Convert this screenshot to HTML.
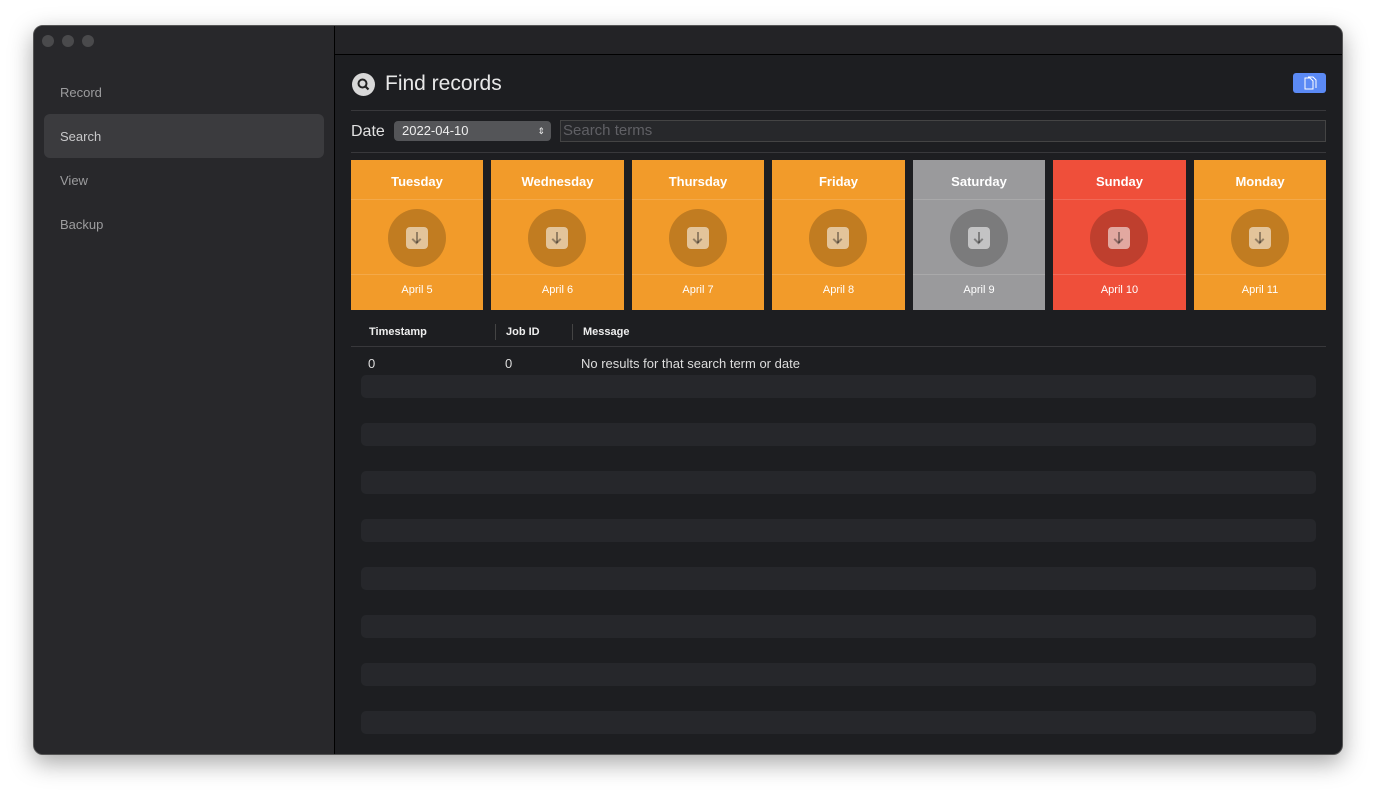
<!DOCTYPE html><html><head><style>
*{margin:0;padding:0;box-sizing:border-box}
body{width:1376px;height:797px;background:#fff;font-family:"Liberation Sans",sans-serif;position:relative;overflow:hidden}
.win{position:absolute;left:33px;top:25px;width:1310px;height:730px;border-radius:10px;overflow:hidden;background:#1d1e21;box-shadow:0 8px 24px rgba(0,0,0,.35);border:1px solid #555}
.side{position:absolute;left:0;top:0;width:301px;height:100%;background:#28282b;border-right:1px solid #000}
.dot{position:absolute;top:9px;width:12px;height:12px;border-radius:50%;background:#4a4a4c}
.nav{position:absolute;left:26px;font-size:13px;color:#9c9c9e}
.sel{position:absolute;left:10px;top:88px;width:280px;height:44px;background:#3b3b3e;border-radius:6px}
.tb{position:absolute;left:301px;top:0;right:0;height:29px;background:#232326;border-bottom:1px solid #000}
.a{position:absolute}
.card{position:absolute;top:134px;width:132px;height:150px;background:#f29b2a;color:#fff;text-align:center}
.card .h{height:40px;line-height:44px;font-size:13px;font-weight:bold;border-bottom:1px solid rgba(255,255,255,.15)}
.card .c{position:absolute;left:37px;top:49px;width:58px;height:58px;border-radius:50%;background:rgba(0,0,0,.2)}
.card .s{position:absolute;left:18px;top:18px;width:22px;height:22px;border-radius:4px;background:rgba(255,255,255,.55)}
.card .f{position:absolute;left:0;right:0;top:114px;border-top:1px solid rgba(255,255,255,.15);font-size:11px;line-height:30px}
.stripe{position:absolute;left:327px;width:955px;height:23px;background:#26272b;border-radius:5px}
</style></head><body><div class="win">
<div class="side"><div class="dot" style="left:8px"></div><div class="dot" style="left:28px"></div><div class="dot" style="left:48px"></div>
<div class="sel"></div>
<div class="nav" style="top:59px">Record</div><div class="nav" style="top:103px;color:#c8c8ca">Search</div><div class="nav" style="top:147px">View</div><div class="nav" style="top:191px">Backup</div></div>
<div class="tb"></div>
<div class="a" style="left:318px;top:47px;width:23px;height:23px;border-radius:50%;background:#d8d8d8"><svg width="23" height="23"><circle cx="10.5" cy="10.5" r="4" fill="none" stroke="#222" stroke-width="2"/><path d="M13.5 13.5l3 3" stroke="#222" stroke-width="2.2"/></svg></div>
<div class="a" style="left:351px;top:46px;font-size:21px;color:#e8e8e8">Find records</div>
<div class="a" style="left:1259px;top:47px;width:33px;height:20px;background:#5b8af5;border-radius:3px"><svg width="33" height="20"><path d="M12 5h5l3 3v8h-8z M15 4h5l3 3v8" fill="none" stroke="#fff" stroke-width="1"/></svg></div>
<div class="a" style="left:317px;top:84px;width:975px;height:1px;background:#38383b"></div>
<div class="a" style="left:317px;top:97px;font-size:16px;color:#e0e0e0">Date</div>
<div class="a" style="left:360px;top:95px;width:157px;height:20px;background:#545558;border-radius:4px;color:#eee;font-size:13px;line-height:20px;padding-left:8px">2022-04-10<span style="position:absolute;right:6px;font-size:9px;top:0">&#8661;</span></div>
<div class="a" style="left:526px;top:94px;width:766px;height:22px;background:#27282b;border:1px solid #444;color:#606065;font-size:15px;line-height:20px;padding-left:2px">Search terms</div>
<div class="a" style="left:317px;top:126px;width:975px;height:1px;background:#38383b"></div>
<div class="card" style="left:317px"><div class="h">Tuesday</div><div class="c"><div class="s"></div></div><div class="f">April 5</div></div>
<div class="card" style="left:457px;width:133px"><div class="h">Wednesday</div><div class="c"><div class="s"></div></div><div class="f">April 6</div></div>
<div class="card" style="left:598px"><div class="h">Thursday</div><div class="c"><div class="s"></div></div><div class="f">April 7</div></div>
<div class="card" style="left:738px;width:133px"><div class="h">Friday</div><div class="c"><div class="s"></div></div><div class="f">April 8</div></div>
<div class="card" style="left:879px;background:#9a9a9c"><div class="h">Saturday</div><div class="c"><div class="s"></div></div><div class="f">April 9</div></div>
<div class="card" style="left:1019px;width:133px;background:#ef4f3a"><div class="h">Sunday</div><div class="c"><div class="s"></div></div><div class="f">April 10</div></div>
<div class="card" style="left:1160px"><div class="h">Monday</div><div class="c"><div class="s"></div></div><div class="f">April 11</div></div>
<div class="a" style="left:335px;top:300px;font-size:11px;font-weight:bold;color:#eee">Timestamp</div>
<div class="a" style="left:461px;top:298px;width:1px;height:16px;background:#444"></div>
<div class="a" style="left:472px;top:300px;font-size:11px;font-weight:bold;color:#eee">Job ID</div>
<div class="a" style="left:538px;top:298px;width:1px;height:16px;background:#444"></div>
<div class="a" style="left:549px;top:300px;font-size:11px;font-weight:bold;color:#eee">Message</div>
<div class="a" style="left:317px;top:320px;width:975px;height:1px;background:#38383b"></div>
<div class="a" style="left:334px;top:330px;font-size:13px;color:#ddd">0</div>
<div class="a" style="left:471px;top:330px;font-size:13px;color:#ddd">0</div>
<div class="a" style="left:547px;top:330px;font-size:13px;color:#ddd">No results for that search term or date</div>
<div class="stripe" style="top:349px"></div><div class="stripe" style="top:397px"></div><div class="stripe" style="top:445px"></div><div class="stripe" style="top:493px"></div><div class="stripe" style="top:541px"></div><div class="stripe" style="top:589px"></div><div class="stripe" style="top:637px"></div><div class="stripe" style="top:685px"></div>
</div>
<style>.card .s::after{content:"";position:absolute;left:10px;top:5px;width:2px;height:11px;background:rgba(0,0,0,.35)}.card .s::before{content:"";position:absolute;left:7px;top:9px;width:5px;height:5px;border-right:2px solid rgba(0,0,0,.35);border-bottom:2px solid rgba(0,0,0,.35);transform:rotate(45deg)}</style>
</body></html>
